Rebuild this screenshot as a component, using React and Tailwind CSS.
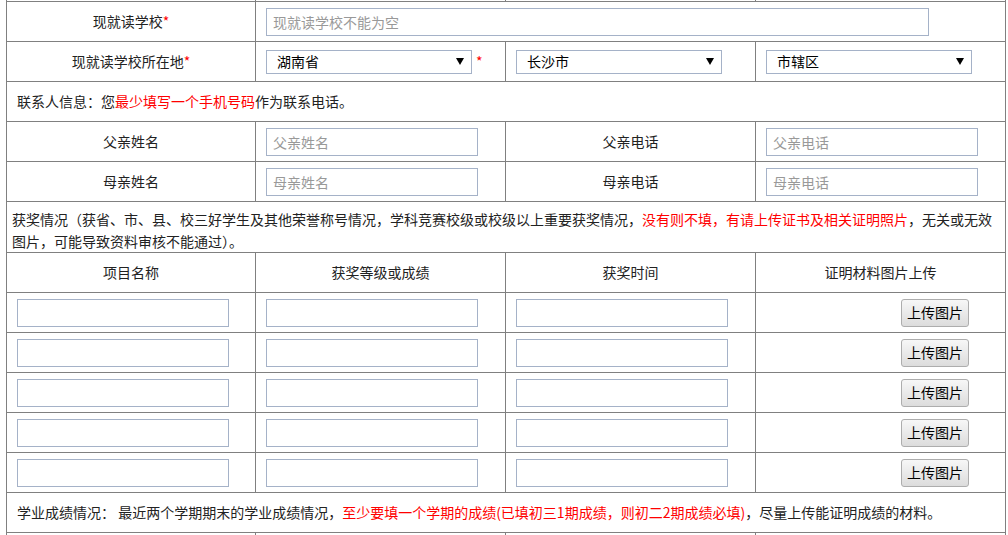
const cell = "border-t border-r border-[#808080] h-[40px] flex items-center";
const font = { };

const Input = ({ placeholder, w = "w-[212px]" }) => (
  <input
    className={`${w} h-[28px] border border-[#a5b2c8] bg-white px-[6px] text-[14px] text-[#333] placeholder:text-[#999] outline-none`}
    placeholder={placeholder}
  />
);

const Select = ({ value }) => (
  <div className="w-[206px] h-[24px] border border-[#a5b2c8] bg-white flex items-center justify-between pl-[10px] pr-[7px] text-[14px] text-black">
    <span>{value}</span>
    <svg width="8" height="7" viewBox="0 0 8 7">
      <path d="M0 0 H8 L4 7 Z" fill="#000" />
    </svg>
  </div>
);

const Label = ({ children, required }) => (
  <div className={`${cell} justify-center`}>
    {children}
    {required && <span className="text-[#ff0000]">*</span>}
  </div>
);

const UploadButton = () => (
  <button className="w-[68px] h-[28px] border border-[#adadad] rounded-[3px] bg-gradient-to-b from-[#f7f7f7] to-[#dcdcdc] text-[14px] text-black">
    上传图片
  </button>
);

export default function App() {
  const awardRows = [0, 1, 2, 3, 4];

  return (
    <div
      className="bg-white w-[1008px] h-[535px] overflow-hidden text-[14px] text-[#222]"
      style={{ fontFamily: '"Microsoft YaHei", "Noto Sans CJK SC", sans-serif' }}
    >
      <div className="ml-[6px] w-[1000px] border-l border-[#808080] grid grid-cols-[249px_250px_250px_250px]">
        {/* tail of the row above */}
        <div className="h-px border-r border-[#808080]" />
        <div className="h-px border-r border-[#808080]" />
        <div className="h-px border-r border-[#808080]" />
        <div className="h-px border-r border-[#808080]" />

        {/* school */}
        <Label required>现就读学校</Label>
        <div className={`${cell} col-span-3 pl-[10px]`}>
          <Input placeholder="现就读学校不能为空" w="w-[663px]" />
        </div>

        {/* location */}
        <Label required>现就读学校所在地</Label>
        <div className={`${cell} pl-[10px] gap-[4px]`}>
          <Select value="湖南省" />
          <span className="text-[#ff0000]">*</span>
        </div>
        <div className={`${cell} pl-[10px]`}>
          <Select value="长沙市" />
        </div>
        <div className={`${cell} pl-[10px]`}>
          <Select value="市辖区" />
        </div>

        {/* contact note */}
        <div className={`${cell} col-span-4 pl-[10px]`}>
          联系人信息：您<span className="text-[#ff0000]">最少填写一个手机号码</span>作为联系电话。
        </div>

        {/* parents */}
        <Label>父亲姓名</Label>
        <div className={`${cell} pl-[10px]`}>
          <Input placeholder="父亲姓名" />
        </div>
        <Label>父亲电话</Label>
        <div className={`${cell} pl-[10px]`}>
          <Input placeholder="父亲电话" />
        </div>

        <Label>母亲姓名</Label>
        <div className={`${cell} pl-[10px]`}>
          <Input placeholder="母亲姓名" />
        </div>
        <Label>母亲电话</Label>
        <div className={`${cell} pl-[10px]`}>
          <Input placeholder="母亲电话" />
        </div>

        {/* awards note */}
        <div className="border-t border-r border-[#808080] h-[51px] col-span-4 pl-[5px] pt-[6px] leading-[22px]">
          获奖情况（获省、市、县、校三好学生及其他荣誉称号情况，学科竞赛校级或校级以上重要获奖情况，
          <span className="text-[#ff0000]">没有则不填，有请上传证书及相关证明照片</span>，无关或无效
          <br />
          图片，可能导致资料审核不能通过）。
        </div>

        {/* awards header */}
        <Label>项目名称</Label>
        <Label>获奖等级或成绩</Label>
        <Label>获奖时间</Label>
        <Label>证明材料图片上传</Label>

        {awardRows.map((i) => (
          <div key={i} className="contents">
            <div className={`${cell} pl-[10px]`}>
              <Input />
            </div>
            <div className={`${cell} pl-[10px]`}>
              <Input />
            </div>
            <div className={`${cell} pl-[10px]`}>
              <Input />
            </div>
            <div className={`${cell} justify-end pr-[36px]`}>
              <UploadButton />
            </div>
          </div>
        ))}

        {/* grades note */}
        <div className={`${cell} col-span-4 pl-[10px]`}>
          学业成绩情况：&nbsp;最近两个学期期末的学业成绩情况，
          <span className="text-[#ff0000]">至少要填一个学期的成绩(已填初三1期成绩，则初二2期成绩必填)</span>
          ，尽量上传能证明成绩的材料。
        </div>

        <div className={cell} />
        <div className={cell} />
        <div className={cell} />
        <div className={cell} />
      </div>
    </div>
  );
}
